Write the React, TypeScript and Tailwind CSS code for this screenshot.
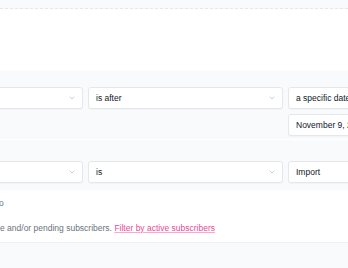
import { ChevronDown } from 'lucide-react';

function Select({ value }: { value: string }) {
  return (
    <div className="w-[195px] h-[22px] shrink-0 bg-white border border-[#e5e7eb] rounded-[3px] shadow-[0_1px_1px_rgba(0,0,0,0.03)] flex items-center justify-between pl-[7px] pr-[6px]">
      <span className="text-[8.5px] text-[#111827] whitespace-nowrap">{value}</span>
      <ChevronDown size={8} strokeWidth={1.6} className="text-[#9ca3af]" />
    </div>
  );
}

function Input({ value, className = '' }: { value: string; className?: string }) {
  return (
    <div className={`w-[195px] h-[22px] shrink-0 bg-white border border-[#e5e7eb] rounded-[3px] shadow-[0_1px_1px_rgba(0,0,0,0.03)] flex items-center pl-[7px] ${className}`}>
      <span className="text-[8.5px] text-[#111827] whitespace-nowrap">{value}</span>
    </div>
  );
}

export default function App() {
  return (
    <div className="w-[348px] h-[268px] overflow-hidden bg-[#f9fafb] font-['Liberation_Sans',Arial,sans-serif]">
      <div className="h-[9px] bg-[#f9fafb] border-b border-dashed border-[#e5e7eb]" />
      <div className="h-[62px] bg-white" />

      <div className="h-[69px] bg-[#f9fafb] pt-[16px] border-b border-white">
        <div className="flex gap-[5px] -ml-[112px]">
          <Select value="" />
          <Select value="is after" />
          <Input value="a specific date" />
        </div>
        <div className="flex gap-[5px] -ml-[112px] mt-[5px]">
          <div className="w-[195px] shrink-0" />
          <div className="w-[195px] shrink-0" />
          <Input value="November 9, 2023" />
        </div>
      </div>

      <div className="h-[50px] bg-[#f9fafb] pt-[21px]">
        <div className="flex gap-[5px] -ml-[112px]">
          <Select value="" />
          <Select value="is" />
          <Input value="Import" />
        </div>
      </div>

      <div className="h-[53px] bg-white border-b border-[#f0f1f3] text-[8.5px] text-[#6b7280] pt-[8px]">
        <p className="leading-[10px] whitespace-nowrap -ml-[1px]">o</p>
        <p className="leading-[10px] whitespace-nowrap mt-[15px]">
          e and/or pending subscribers.{' '}
          <a className="text-[#ec4899] underline decoration-[#f9a8d4] underline-offset-[1px]">Filter by active subscribers</a>
        </p>
      </div>
    </div>
  );
}
